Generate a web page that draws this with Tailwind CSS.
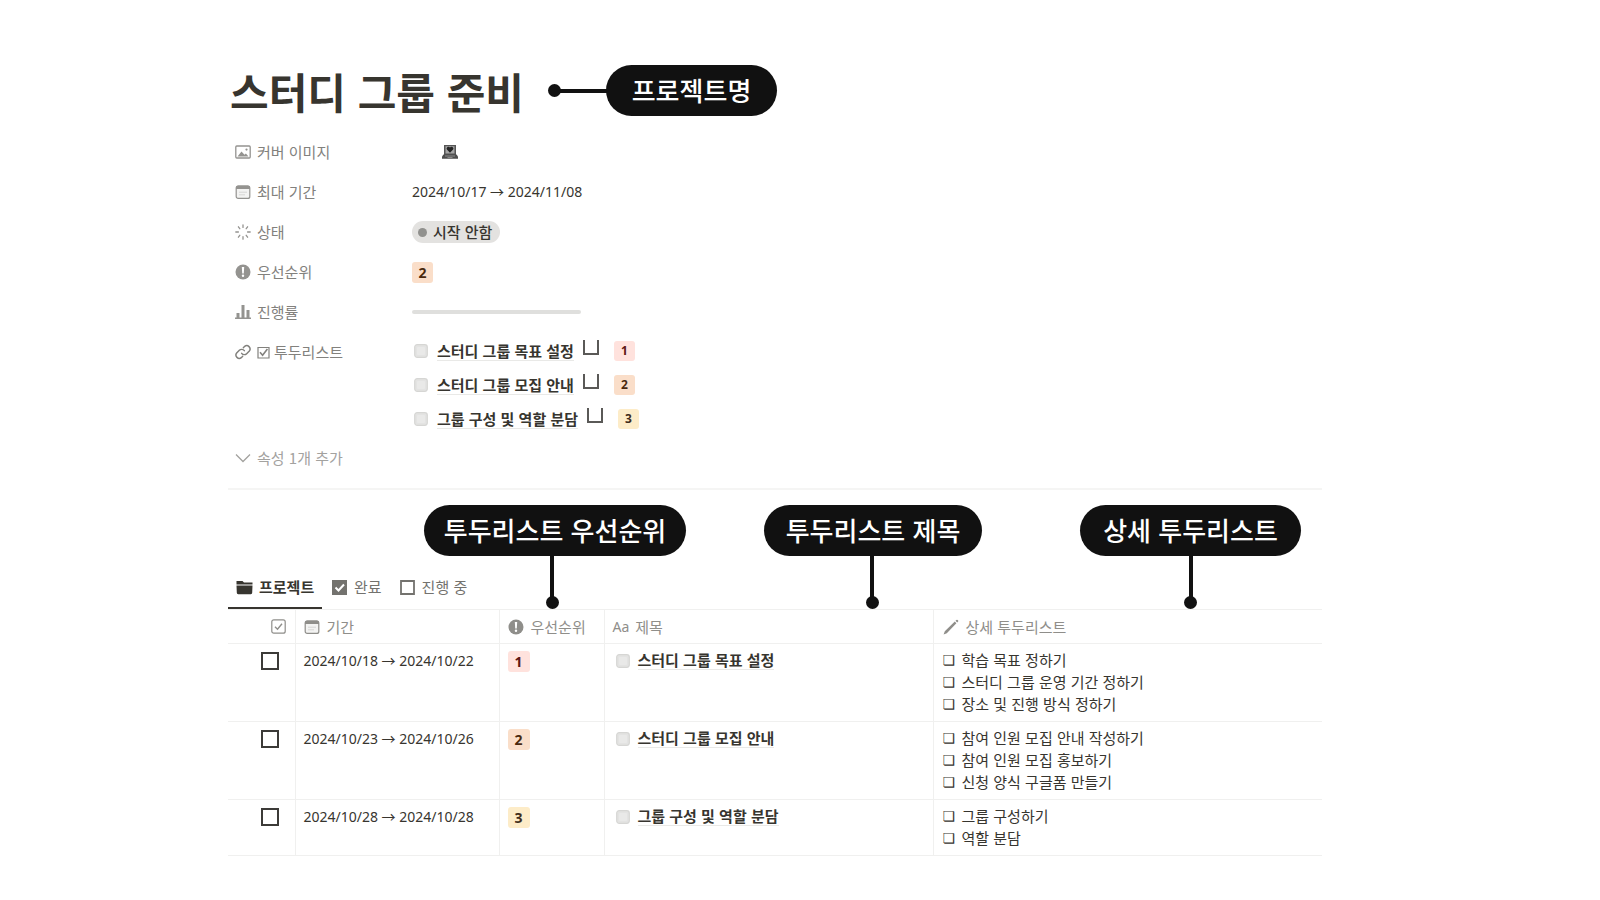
<!DOCTYPE html>
<html lang="ko">
<head>
    <meta charset="UTF-8">
    <meta name="viewport" content="width=device-width, initial-scale=1.0">
    <title>스터디 그룹 준비</title>
    <script src="https://cdn.jsdelivr.net/npm/@tailwindcss/browser@4"></script>
</head>
<body class="bg-white font-['Noto_Sans_CJK_KR',sans-serif] text-[15px] leading-[22px] text-[#37352f]">
    <!-- Shared icons -->
    <svg class="hidden" xmlns="http://www.w3.org/2000/svg">
        <symbol id="icon-calendar" viewBox="0 0 16 16">
            <rect x="1.2" y="2" width="13.6" height="12.4" rx="2" fill="#f3f3f2" stroke="currentColor" stroke-width="1.2"/>
            <path d="M1 5V4a2.2 2.2 0 0 1 2.2-2.4h9.6A2.2 2.2 0 0 1 15 4v1z" fill="currentColor"/>
            <path d="M4 8.2h8M4 10.8h6" stroke="#d6d6d4" stroke-width="1"/>
        </symbol>
        <symbol id="icon-alert" viewBox="0 0 16 16">
            <circle cx="8" cy="8" r="7.5" fill="currentColor"/>
            <path d="M6.8 3h2.4l-.4 6.400H7.200z" fill="#fff"/>
            <circle cx="8" cy="11.700" r="1.200" fill="#fff"/>
        </symbol>
        <symbol id="icon-page" viewBox="0 0 14 14">
            <rect x=".7" y=".7" width="12.600" height="12.600" rx="2.500" fill="#e3e3e2" stroke="#d6d6d4" stroke-width="1.200"/>
            <rect x="3" y="3" width="8" height="8" rx="1" fill="#e9e9e8"/>
        </symbol>
    </svg>

    <main class="pl-[228px] pr-[278px] pt-[65px] pb-10">
        <header class="flex items-center">
            <h1 class="pl-[2px] text-[42px] leading-[51px] font-bold">스터디 그룹 준비</h1>
            <div class="ml-6 flex items-center">
                <span class="size-[13px] rounded-full bg-[#111]"></span>
                <span class="-ml-px h-1 w-[47px] bg-[#111]"></span>
                <span class="-ml-px h-[51px] w-[171px] rounded-full bg-[#111] text-center text-[26px] leading-[50px] font-medium text-white">프로젝트명</span>
            </div>
        </header>

        <!-- Properties -->
        <dl class="mt-4">
            <div class="flex h-10 items-center">
                <dt class="flex w-[184px] items-center gap-[6px] pl-[7px] text-[#82817d]">
                    <svg class="size-4 text-[#949390]" viewBox="0 0 16 16" fill="none">
                        <rect x=".8" y="2" width="14.400" height="12" rx="1" stroke="currentColor" stroke-width="1.300"/>
                        <path d="M2.500 12.400l4-5 3 3.400 1.400-1.400 2.600 3z" fill="currentColor"/>
                        <circle cx="11.500" cy="5.600" r="1.100" fill="currentColor"/>
                    </svg>
                    커버 이미지
                </dt>
                <dd class="pl-[30px]">
                    <svg class="size-4" viewBox="0 0 16 16">
                        <path d="M2 1h12v10H2z" fill="#555"/>
                        <path d="M3.500 2.200h9v7.300h-9z" fill="#a5a5a5"/>
                        <path d="M8 8.800L4.900 5.600a1.700 1.700 0 0 1 3.100-2 1.700 1.700 0 0 1 3.100 2z" fill="#222"/>
                        <path d="M1.500 10.500h13l1.500 2v2.200H0v-2.200z" fill="#4d4d4d"/>
                        <path d="M3 12h10M5.500 13.500h5" stroke="#999" stroke-width=".8"/>
                    </svg>
                </dd>
            </div>
            <div class="flex h-10 items-center">
                <dt class="flex w-[184px] items-center gap-[6px] pl-[7px] text-[#82817d]">
                    <svg class="size-4 text-[#949390]"><use href="#icon-calendar"/></svg>
                    최대 기간
                </dt>
                <dd class="font-['Noto_Sans','Noto_Sans_CJK_KR',sans-serif] text-[14px]">2024/10/17 → 2024/11/08</dd>
            </div>
            <div class="flex h-10 items-center">
                <dt class="flex w-[184px] items-center gap-[6px] pl-[7px] text-[#82817d]">
                    <svg class="size-4 text-[#949390]" viewBox="0 0 16 16" stroke="currentColor" stroke-width="1.300" stroke-linecap="round">
                        <path d="M8 .8v2.600M8 12.600v2.600M.8 8h2.600M12.600 8h2.600M3.400 2.800l1.400 1.900M11.200 11.300l1.400 1.900M12.600 2.800l-1.400 1.900M4.800 11.300l-1.400 1.900"/>
                    </svg>
                    상태
                </dt>
                <dd class="flex h-[22px] items-center gap-[6px] rounded-full bg-[#e3e2e0] pr-2 pl-[6px] font-medium">
                    <span class="size-[9px] rounded-full bg-[#91918e]"></span>
                    시작 안함
                </dd>
            </div>
            <div class="flex h-10 items-center">
                <dt class="flex w-[184px] items-center gap-[6px] pl-[7px] text-[#82817d]">
                    <svg class="size-4 text-[#949390]"><use href="#icon-alert"/></svg>
                    우선순위
                </dt>
                <dd class="w-[21px] rounded-[3px] bg-[#fadec9] text-center font-['Noto_Sans',sans-serif] text-[14px] leading-[21px] font-bold text-[#49290e]">2</dd>
            </div>
            <div class="flex h-10 items-center">
                <dt class="flex w-[184px] items-center gap-[6px] pl-[7px] text-[#82817d]">
                    <svg class="size-4 text-[#949390]" viewBox="0 0 16 16" fill="currentColor">
                        <path d="M0 13.500h16V15H0zM1.500 9h3v5h-3zM6.500 1h3v13h-3zM11.500 6h3v8h-3z"/>
                    </svg>
                    진행률
                </dt>
                <dd class="h-1 w-[169px] rounded-full bg-[#dfdfdd]"></dd>
            </div>
            <div class="flex items-start">
                <dt class="flex h-10 w-[184px] items-center gap-[6px] pl-[7px] text-[#82817d]">
                    <svg class="size-4" viewBox="0 0 24 24" fill="none" stroke="currentColor" stroke-width="2.200" stroke-linecap="round">
                        <path d="M10 14a5 5 0 0 0 7.500.5l4-4a5 5 0 0 0-7-7L12.500 5.500"/>
                        <path d="M14 10a5 5 0 0 0-7.500-.5l-4 4a5 5 0 0 0 7 7l2-2"/>
                    </svg>
                    <span class="flex items-center gap-1">
                        <svg class="size-[13px]" viewBox="0 0 13 13" fill="none" stroke="currentColor">
                            <path d="M1 1.500h11v10.500H1z" stroke-width="1.200"/>
                            <path d="M3 6.200l2.600 3L10.400 3" stroke-width="1.600"/>
                        </svg>
                        투두리스트
                    </span>
                </dt>
                <dd class="pt-[2px]">
                    <ul class="font-bold">
                        <li class="flex h-[34px] items-center pl-[2px]">
                            <svg class="size-[14px]"><use href="#icon-page"/></svg>
                            <a href="#" class="ml-[9px] border-b border-[#e9e9e7] leading-[18px]">스터디 그룹 목표 설정</a>
                            <input type="checkbox" aria-label="스터디 그룹 목표 설정" class="mb-2 ml-[9px] h-[15px] w-4 appearance-none border-2 border-t-0 border-[#5a5957]">
                            <span class="ml-[15px] w-[21px] rounded-[3px] bg-[#ffe2dd] text-center font-['Noto_Sans',sans-serif] text-[12px] leading-[20px] text-[#5d1715]">1</span>
                        </li>
                        <li class="flex h-[34px] items-center pl-[2px]">
                            <svg class="size-[14px]"><use href="#icon-page"/></svg>
                            <a href="#" class="ml-[9px] border-b border-[#e9e9e7] leading-[18px]">스터디 그룹 모집 안내</a>
                            <input type="checkbox" aria-label="스터디 그룹 모집 안내" class="mb-2 ml-[9px] h-[15px] w-4 appearance-none border-2 border-t-0 border-[#5a5957]">
                            <span class="ml-[15px] w-[21px] rounded-[3px] bg-[#fadec9] text-center font-['Noto_Sans',sans-serif] text-[12px] leading-[20px] text-[#49290e]">2</span>
                        </li>
                        <li class="flex h-[34px] items-center pl-[2px]">
                            <svg class="size-[14px]"><use href="#icon-page"/></svg>
                            <a href="#" class="ml-[9px] border-b border-[#e9e9e7] leading-[18px]">그룹 구성 및 역할 분담</a>
                            <input type="checkbox" aria-label="그룹 구성 및 역할 분담" class="mb-2 ml-[9px] h-[15px] w-4 appearance-none border-2 border-t-0 border-[#5a5957]">
                            <span class="ml-[15px] w-[21px] rounded-[3px] bg-[#fdecc8] text-center font-['Noto_Sans',sans-serif] text-[12px] leading-[20px] text-[#402c1b]">3</span>
                        </li>
                    </ul>
                </dd>
            </div>
        </dl>
        <button type="button" class="mt-[2px] flex h-10 items-center gap-[6px] pl-[7px] text-[#a3a29f]">
            <svg class="size-4" viewBox="0 0 16 16" fill="none" stroke="currentColor" stroke-width="1.300">
                <path d="M1 4.500l7 7 7-7"/>
            </svg>
            속성 1개 추가
        </button>

        <!-- To-do table -->
        <section class="relative mt-[10px] border-t-2 border-[#f5f5f4] pt-[77px]">
            <div class="absolute top-[15px] left-[196px] h-[51px] w-[262px] rounded-full bg-[#111] text-center text-[26px] leading-[49px] font-medium text-white">
                투두리스트 우선순위
                <span class="absolute top-[50px] left-[126px] h-[44px] w-1 bg-[#111]"></span>
                <span class="absolute top-[91px] left-[122px] size-[13px] rounded-full bg-[#111]"></span>
            </div>
            <div class="absolute top-[15px] left-[536px] h-[51px] w-[218px] rounded-full bg-[#111] text-center text-[26px] leading-[49px] font-medium text-white">
                투두리스트 제목
                <span class="absolute top-[50px] left-[106px] h-[44px] w-1 bg-[#111]"></span>
                <span class="absolute top-[91px] left-[102px] size-[13px] rounded-full bg-[#111]"></span>
            </div>
            <div class="absolute top-[15px] left-[852px] h-[51px] w-[221px] rounded-full bg-[#111] text-center text-[26px] leading-[49px] font-medium text-white">
                상세 투두리스트
                <span class="absolute top-[50px] left-[109px] h-[44px] w-1 bg-[#111]"></span>
                <span class="absolute top-[91px] left-[104px] size-[13px] rounded-full bg-[#111]"></span>
            </div>

            <div class="flex h-[42px] text-[#73726e]">
                <button type="button" class="flex w-[94px] items-center gap-[6px] border-b-2 border-[#37352f] pl-2 font-bold text-[#37352f]">
                    <svg class="size-[17px]" viewBox="0 0 17 17" fill="currentColor">
                        <path d="M.5 2h6l1.500 1.500h8.500v2H.5zM.5 6.500h16l-.3 7.300a1.400 1.400 0 0 1-1.400 1.400H2.200a1.400 1.400 0 0 1-1.400-1.400z"/>
                    </svg>
                    프로젝트
                </button>
                <button type="button" class="ml-[10px] flex items-center gap-[7px] border-b-2 border-transparent">
                    <svg class="size-[15px]" viewBox="0 0 15 15">
                        <path d="M0 0h15v15H0z" fill="currentColor"/>
                        <path d="M3.500 7.500l3 3 5.500-6" fill="none" stroke="#fff" stroke-width="2"/>
                    </svg>
                    완료
                </button>
                <button type="button" class="ml-[18px] flex items-center gap-[7px] border-b-2 border-transparent">
                    <svg class="size-[15px]" viewBox="0 0 15 15">
                        <path d="M1 1h13v13H1z" fill="none" stroke="currentColor" stroke-width="1.800"/>
                    </svg>
                    진행 중
                </button>
            </div>

            <table class="w-full table-fixed border-collapse border-y border-[#f0f0ef]">
                <thead>
                    <tr class="h-[34px] border-b border-[#f0f0ef] text-left text-[#8f8e8a]">
                        <th class="w-[67px] border-r border-[#f0f0ef] pr-[9px] font-normal">
                            <svg class="ml-auto size-[15px]" viewBox="0 0 15 15" fill="none" stroke="currentColor" role="img" aria-label="완료">
                                <rect x=".8" y=".8" width="13.400" height="13.400" rx="2" stroke-width="1.200"/>
                                <path d="M4 7.800l2.500 2.500 4.500-5.500" stroke-width="1.400"/>
                            </svg>
                        </th>
                        <th class="w-[204px] border-r border-[#f0f0ef] pl-2 font-normal">
                            <span class="flex items-center gap-[7px]">
                                <svg class="size-4"><use href="#icon-calendar"/></svg>
                                기간
                            </span>
                        </th>
                        <th class="w-[105px] border-r border-[#f0f0ef] pl-2 font-normal">
                            <span class="flex items-center gap-[7px]">
                                <svg class="size-4"><use href="#icon-alert"/></svg>
                                우선순위
                            </span>
                        </th>
                        <th class="w-[329px] border-r border-[#f0f0ef] pl-2 font-normal">
                            <span class="flex items-center gap-[6px]">
                                <span class="font-['Noto_Sans',sans-serif] text-[14px]">Aa</span>
                                제목
                            </span>
                        </th>
                        <th class="pl-[9px] font-normal">
                            <span class="flex items-center gap-[7px]">
                                <svg class="size-4" viewBox="0 0 16 16" fill="currentColor">
                                    <path d="M.6 15.400l1.200-3.200L11.800 2.600l1.600 1.600L3.800 14.200zM12.500 1.800l.9-.9a.9.9 0 0 1 1.200 0l.5.5a.9.9 0 0 1 0 1.200l-.9.9z"/>
                                </svg>
                                상세 투두리스트
                            </span>
                        </th>
                    </tr>
                </thead>
                <tbody class="align-top">
                    <tr class="border-b border-[#f0f0ef]">
                        <td class="border-r border-[#f0f0ef] pt-2 pr-[16px]">
                            <input type="checkbox" aria-label="스터디 그룹 목표 설정 완료" class="ml-auto block size-[18px] appearance-none border-2 border-[#3c3b38]">
                        </td>
                        <td class="border-r border-[#f0f0ef] pt-[6px] pl-2 font-['Noto_Sans','Noto_Sans_CJK_KR',sans-serif] text-[14px]">2024/10/18 → 2024/10/22</td>
                        <td class="border-r border-[#f0f0ef] pt-[7px] pl-2">
                            <span class="block w-[22px] rounded-[3px] bg-[#ffe2dd] text-center font-['Noto_Sans',sans-serif] text-[14px] leading-[21px] font-bold text-[#5d1715]">1</span>
                        </td>
                        <td class="border-r border-[#f0f0ef] pt-[7px] pl-[11px]">
                            <span class="flex items-center gap-2">
                                <svg class="size-[14px]"><use href="#icon-page"/></svg>
                                <a href="#" class="border-b border-[#e9e9e7] leading-[18px] font-bold">스터디 그룹 목표 설정</a>
                            </span>
                        </td>
                        <td class="pt-[5px] pb-[6px] pl-[9px]">
                            <ul>
                                <li class="flex"><span class="w-[19px] font-['DejaVu_Sans',sans-serif] text-[14px]">❏</span>학습 목표 정하기</li>
                                <li class="flex"><span class="w-[19px] font-['DejaVu_Sans',sans-serif] text-[14px]">❏</span>스터디 그룹 운영 기간 정하기</li>
                                <li class="flex"><span class="w-[19px] font-['DejaVu_Sans',sans-serif] text-[14px]">❏</span>장소 및 진행 방식 정하기</li>
                            </ul>
                        </td>
                    </tr>
                    <tr class="border-b border-[#f0f0ef]">
                        <td class="border-r border-[#f0f0ef] pt-2 pr-[16px]">
                            <input type="checkbox" aria-label="스터디 그룹 모집 안내 완료" class="ml-auto block size-[18px] appearance-none border-2 border-[#3c3b38]">
                        </td>
                        <td class="border-r border-[#f0f0ef] pt-[6px] pl-2 font-['Noto_Sans','Noto_Sans_CJK_KR',sans-serif] text-[14px]">2024/10/23 → 2024/10/26</td>
                        <td class="border-r border-[#f0f0ef] pt-[7px] pl-2">
                            <span class="block w-[22px] rounded-[3px] bg-[#fadec9] text-center font-['Noto_Sans',sans-serif] text-[14px] leading-[21px] font-bold text-[#49290e]">2</span>
                        </td>
                        <td class="border-r border-[#f0f0ef] pt-[7px] pl-[11px]">
                            <span class="flex items-center gap-2">
                                <svg class="size-[14px]"><use href="#icon-page"/></svg>
                                <a href="#" class="border-b border-[#e9e9e7] leading-[18px] font-bold">스터디 그룹 모집 안내</a>
                            </span>
                        </td>
                        <td class="pt-[5px] pb-[6px] pl-[9px]">
                            <ul>
                                <li class="flex"><span class="w-[19px] font-['DejaVu_Sans',sans-serif] text-[14px]">❏</span>참여 인원 모집 안내 작성하기</li>
                                <li class="flex"><span class="w-[19px] font-['DejaVu_Sans',sans-serif] text-[14px]">❏</span>참여 인원 모집 홍보하기</li>
                                <li class="flex"><span class="w-[19px] font-['DejaVu_Sans',sans-serif] text-[14px]">❏</span>신청 양식 구글폼 만들기</li>
                            </ul>
                        </td>
                    </tr>
                    <tr>
                        <td class="border-r border-[#f0f0ef] pt-2 pr-[16px]">
                            <input type="checkbox" aria-label="그룹 구성 및 역할 분담 완료" class="ml-auto block size-[18px] appearance-none border-2 border-[#3c3b38]">
                        </td>
                        <td class="border-r border-[#f0f0ef] pt-[6px] pl-2 font-['Noto_Sans','Noto_Sans_CJK_KR',sans-serif] text-[14px]">2024/10/28 → 2024/10/28</td>
                        <td class="border-r border-[#f0f0ef] pt-[7px] pl-2">
                            <span class="block w-[22px] rounded-[3px] bg-[#fdecc8] text-center font-['Noto_Sans',sans-serif] text-[14px] leading-[21px] font-bold text-[#402c1b]">3</span>
                        </td>
                        <td class="border-r border-[#f0f0ef] pt-[7px] pl-[11px]">
                            <span class="flex items-center gap-2">
                                <svg class="size-[14px]"><use href="#icon-page"/></svg>
                                <a href="#" class="border-b border-[#e9e9e7] leading-[18px] font-bold">그룹 구성 및 역할 분담</a>
                            </span>
                        </td>
                        <td class="pt-[5px] pb-[6px] pl-[9px]">
                            <ul>
                                <li class="flex"><span class="w-[19px] font-['DejaVu_Sans',sans-serif] text-[14px]">❏</span>그룹 구성하기</li>
                                <li class="flex"><span class="w-[19px] font-['DejaVu_Sans',sans-serif] text-[14px]">❏</span>역할 분담</li>
                            </ul>
                        </td>
                    </tr>
                </tbody>
            </table>
        </section>
    </main>
</body>
</html>
